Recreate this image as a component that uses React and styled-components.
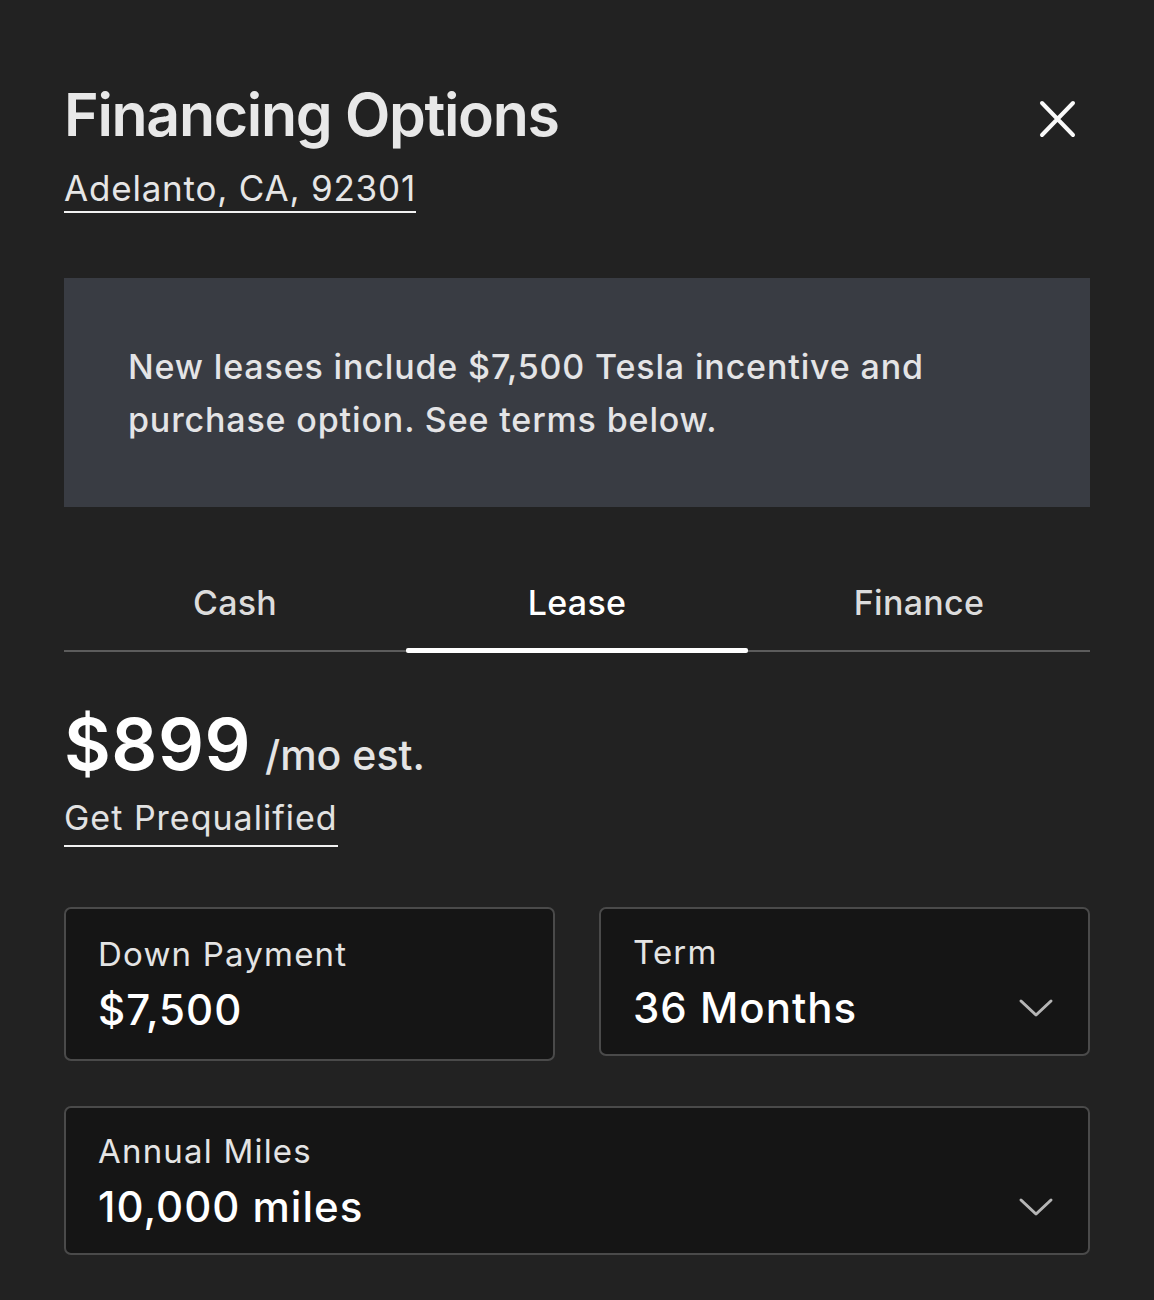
import styled, { createGlobalStyle } from 'styled-components';

const GlobalStyle = createGlobalStyle`
    html, body {
        margin: 0;
        padding: 0;
        background: #222222;
    }
    body {
        font-family: Inter, "Noto Sans", "Liberation Sans", sans-serif;
        color: #e6e6e6;
    }
`;

export default function App() {
    return (
        <>
            <GlobalStyle />
            <Container>
                <Header>
                    <div>
                        <Title>Financing Options</Title>
                        <Location>Adelanto, CA, 92301</Location>
                    </div>
                    <Close aria-label="close">
                        <svg width="38" height="38" viewBox="0 0 38 38">
                            <path d="M4 3 L35 35 M35 3 L4 35" stroke="#fafafa" strokeWidth="4" strokeLinecap="round" />
                        </svg>
                    </Close>
                </Header>

                <Banner>
                    New leases include $7,500 Tesla incentive and purchase option. See terms below.
                </Banner>

                <Tabs>
                    <Tab>Cash</Tab>
                    <Tab active>Lease</Tab>
                    <Tab>Finance</Tab>
                </Tabs>

                <Price>
                    <Amount>$899</Amount>
                    <Per>/mo est.</Per>
                </Price>
                <Prequal>Get Prequalified</Prequal>

                <Fields>
                    <Field $h={154}>
                        <FieldText>
                            <Label>Down Payment</Label>
                            <Value>$7,500</Value>
                        </FieldText>
                    </Field>
                    <Field $h={149}>
                        <FieldText>
                            <Label>Term</Label>
                            <Value>36 Months</Value>
                        </FieldText>
                        <Chevron />
                    </Field>
                    <Field $h={149} $wide>
                        <FieldText>
                            <Label>Annual Miles</Label>
                            <Value>10,000 miles</Value>
                        </FieldText>
                        <Chevron />
                    </Field>
                </Fields>
            </Container>
        </>
    );
}

function Chevron() {
    return (
        <ChevronBox>
            <svg width="36" height="22" viewBox="0 0 36 22">
                <path d="M3 4 L18 18 L33 4" fill="none" stroke="#b5b5b5" strokeWidth="3" strokeLinecap="round" strokeLinejoin="round" />
            </svg>
        </ChevronBox>
    );
}

/* --- STYLES --- */
const Container = styled.div`
    width: 100%;
    padding: 80px 64px 44px 64px;
    min-height: 1300px;
    box-sizing: border-box;
`;
const Header = styled.div`
    display: flex;
    justify-content: space-between;
    align-items: flex-start;
    padding-right: 14px;
`;
const Title = styled.h1`
    margin: 0;
    font-size: 59px;
    font-weight: 600;
    letter-spacing: -1.3px;
    line-height: 70px;
    color: #e8e8e8;
`;
const Location = styled.a`
    display: inline-block;
    margin-top: 18px;
    font-size: 35px;
    line-height: 40px;
    font-weight: 400;
    color: #e6e6e6;
    border-bottom: 2px solid #f2f2f2;
    padding-bottom: 3px;
    letter-spacing: 0.8px;
`;
const Close = styled.button`
    background: none;
    border: none;
    padding: 0;
    margin-top: 20px;
    cursor: pointer;
`;
const Banner = styled.div`
    margin-top: 65px;
    background: #393c43;
    padding: 62px 100px 61px 64px;
    min-height: 229px;
    box-sizing: border-box;
    font-size: 34px;
    line-height: 53px;
    font-weight: 500;
    color: #e4e4e6;
    letter-spacing: 0.85px;
`;
const Tabs = styled.div`
    margin-top: 76px;
    display: grid;
    grid-template-columns: 1fr 1fr 1fr;
    border-bottom: 2px solid #5c5c5c;
`;
const Tab = styled.div`
    text-align: center;
    font-size: 34px;
    font-weight: 500;
    line-height: 40px;
    padding-bottom: 27px;
    letter-spacing: 0.3px;
    color: ${p => p.active ? '#ffffff' : '#dcdcdc'};
    position: relative;
    &::after {
        content: '';
        display: ${p => p.active ? 'block' : 'none'};
        position: absolute;
        left: 0;
        right: 0;
        bottom: -3px;
        height: 5px;
        border-radius: 2px;
        background: #ffffff;
    }
`;
const Price = styled.div`
    margin-top: 52px;
    display: flex;
    align-items: baseline;
    gap: 14px;
`;
const Amount = styled.span`
    font-size: 72px;
    font-weight: 600;
    line-height: 80px;
    color: #ffffff;
    letter-spacing: 0.5px;
`;
const Per = styled.span`
    font-size: 41px;
    font-weight: 500;
    color: #e4e4e4;
    letter-spacing: 0px;
`;
const Prequal = styled.a`
    display: inline-block;
    margin-top: 12px;
    font-size: 34px;
    line-height: 44px;
    color: #e2e2e2;
    border-bottom: 2px solid #f2f2f2;
    padding-bottom: 5px;
    letter-spacing: 1px;
`;
const Fields = styled.div`
    margin-top: 60px;
    display: grid;
    grid-template-columns: 1fr 1fr;
    column-gap: 44px;
    row-gap: 45px;
    align-items: start;
`;
const Field = styled.div`
    grid-column: ${p => p.$wide ? '1 / span 2' : 'auto'};
    height: ${p => p.$h}px;
    box-sizing: border-box;
    background: #151515;
    border: 2px solid #4a4a4a;
    border-radius: 7px;
    padding: 0 34px 0 32px;
    display: flex;
    align-items: center;
    justify-content: space-between;
`;
const FieldText = styled.div`
    display: flex;
    flex-direction: column;
    gap: 12px;
`;
const Label = styled.span`
    font-size: 33px;
    line-height: 40px;
    color: #e4e4e4;
    letter-spacing: 1.2px;
`;
const Value = styled.span`
    font-size: 42px;
    line-height: 48px;
    font-weight: 500;
    color: #ffffff;
    letter-spacing: 1px;
`;
const ChevronBox = styled.div`
    display: flex;
    align-self: flex-end;
    margin-bottom: 35px;
`;
